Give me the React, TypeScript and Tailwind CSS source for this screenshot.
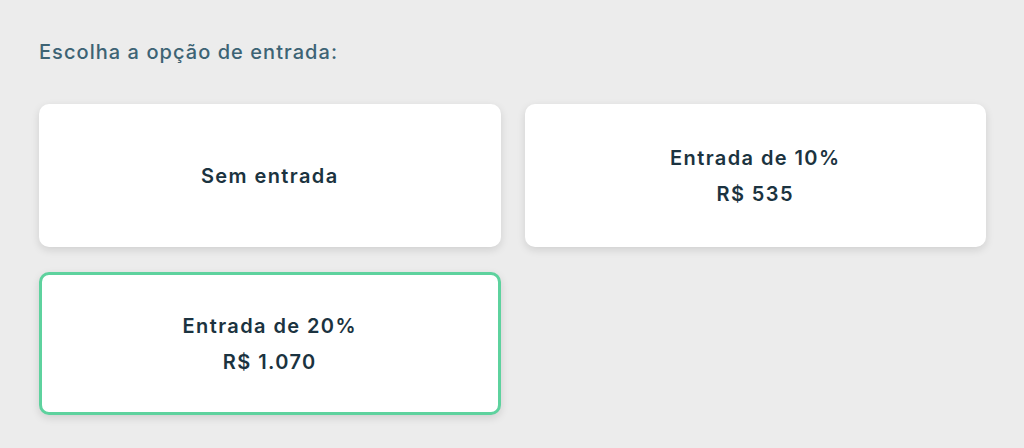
import React from "react";

const options = [
  { lines: ["Sem entrada"], selected: false },
  { lines: ["Entrada de 10%", "R$ 535"], selected: false },
  { lines: ["Entrada de 20%", "R$ 1.070"], selected: true },
];

export default function App() {
  return (
    <div
      className="w-[1024px] h-[448px] bg-[#ececec] pl-[39px] pr-[38px] pt-[38px]"
      style={{ fontFamily: "Inter, 'Open Sans', sans-serif" }}
    >
      <h1 className="text-[20px] leading-[28px] font-medium tracking-[1.05px] text-[#3d6374]">
        Escolha a opção de entrada:
      </h1>
      <div className="mt-[38px] grid grid-cols-2 gap-x-6 gap-y-[25px]">
        {options.map((o, i) => (
          <div
            key={i}
            className={`h-[143px] rounded-[10px] bg-white flex flex-col items-center justify-center shadow-[0_3px_8px_rgba(0,0,0,0.12)] ${
              o.selected ? "border-[3px] border-[#5ed29e]" : ""
            }`}
          >
            {o.lines.map((l, j) => (
              <div
                key={j}
                className="text-[20px] leading-[36px] font-semibold tracking-[1.4px] text-[#1b3340]"
              >
                {l}
              </div>
            ))}
          </div>
        ))}
      </div>
    </div>
  );
}
